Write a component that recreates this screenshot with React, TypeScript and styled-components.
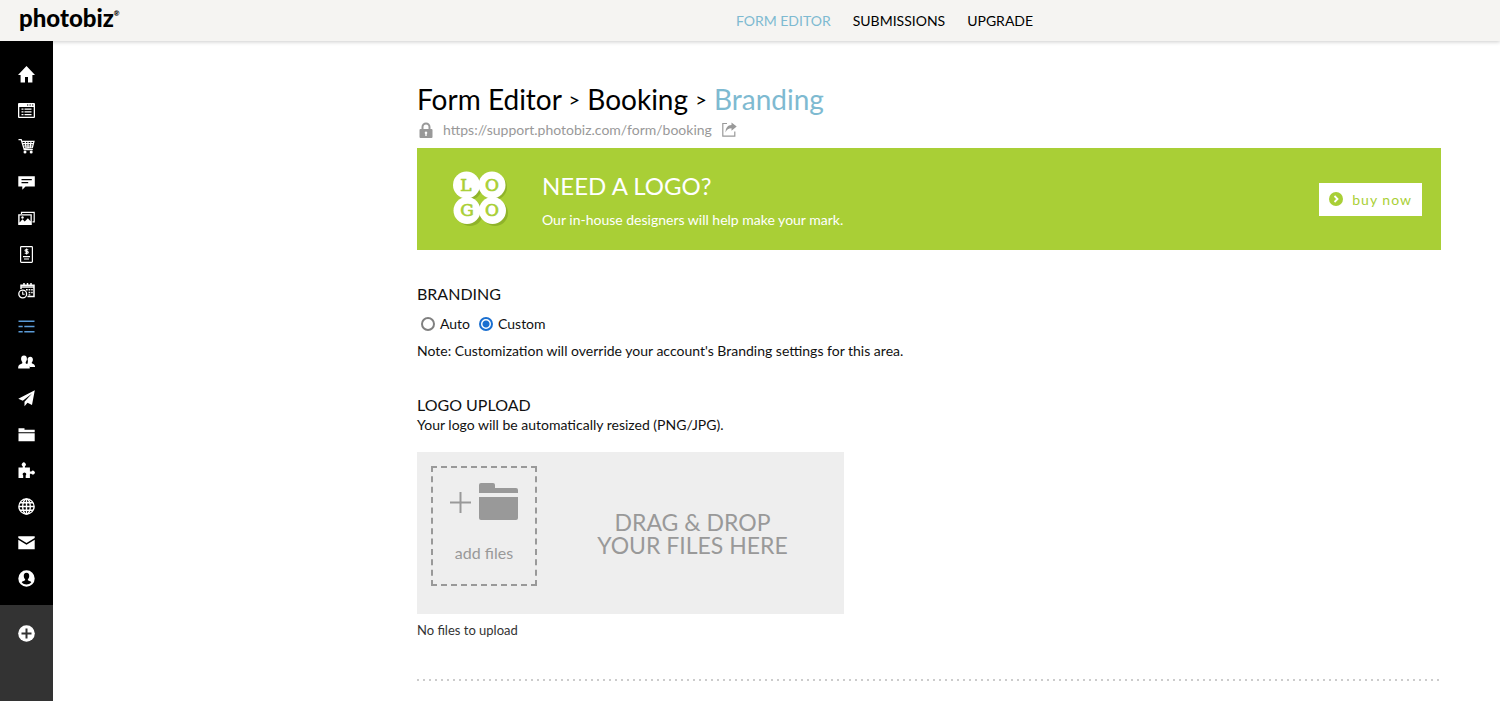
import React, { useState } from "react";
import styled, { createGlobalStyle } from "styled-components";

const GlobalStyle = createGlobalStyle`
  * { box-sizing: border-box; }
  body {
    margin: 0;
    background: #fff;
    color: #111;
    font-family: Lato, "Open Sans", sans-serif;
    font-size: 14px;
    line-height: 20px;
  }
  h1, h2, p, ul { margin: 0; padding: 0; }
  button { font-family: inherit; cursor: pointer; }
`;

const Page = styled.div`
  min-height: 100vh;
  display: flex;
  flex-direction: column;
`;

const Header = styled.header`
  display: flex;
  align-items: center;
  height: 41px;
  background: #f5f4f2;
  box-shadow: 0 1px 4px rgba(0, 0, 0, 0.2);
`;

const Brand = styled.a`
  flex: 0 0 269px;
  display: flex;
  align-items: flex-start;
  padding: 0 0 6px 19px;
  color: #000;
  font-size: 24px;
  font-weight: 900;
  line-height: 24px;
  text-decoration: none;

  sup {
    font-size: 7px;
    line-height: 14px;
  }
`;

const TopNav = styled.nav`
  flex: 1;
  display: flex;
  justify-content: center;
  gap: 22px;
`;

const TopLink = styled.a<{ $active?: boolean }>`
  color: ${(p) => (p.$active ? "#7ebad1" : "#000")};
  font-size: 14px;
  text-decoration: none;
`;

const Body = styled.div`
  flex: 1;
  display: flex;
`;

const Sidebar = styled.nav`
  position: relative;
  flex: 0 0 53px;
  display: flex;
  flex-direction: column;
  background: #333;
`;

const SideList = styled.ul`
  list-style: none;
  background: #000;
  && { padding: 15px 0 9px; }
`;

const SideLink = styled.a<{ $active?: boolean }>`
  display: flex;
  align-items: center;
  justify-content: center;
  height: 36px;
  color: ${(p) => (p.$active ? "#5b9bd8" : "#fff")};
`;

const SideFooter = styled.div`
  padding-top: 10px;
`;

const Main = styled.main`
  flex: 1;
  min-width: 0;
  padding: 40px 59px 20px;
`;

const Content = styled.div`
  max-width: 1024px;
  margin-left: auto;
`;

const Title = styled.h1`
  font-size: 28px;
  font-weight: 400;
  line-height: 36px;
  color: #000;
`;

const Current = styled.span`
  color: #7ebad1;
`;

const Chevron = styled.span`
  font-size: 20px;
  line-height: 20px;
  vertical-align: 3px;
`;

const UrlRow = styled.div`
  display: flex;
  align-items: center;
  gap: 10px;
  height: 31px;
  padding: 0 0 6px 2px;
  color: #999;

  a {
    color: inherit;
    text-decoration: none;
  }
`;

const Banner = styled.section`
  display: flex;
  align-items: center;
  height: 102px;
  padding: 0 19px 0 35px;
  background: #a9cf36;
  color: #fff;
`;

const BannerText = styled.div`
  flex: 1;
  padding: 2px 0 0 32px;
`;

const BannerTitle = styled.h2`
  font-size: 24px;
  font-weight: 400;
  line-height: 32px;
`;

const BannerNote = styled.p`
  padding-top: 8px;
`;

const BuyButton = styled.button`
  display: flex;
  align-items: center;
  gap: 9px;
  height: 33px;
  padding: 0 10px;
  border: 0;
  background: #fff;
  color: #a9cf36;
  font-size: 14px;
  letter-spacing: 1px;
`;

const Section = styled.section`
  padding-top: 34px;
`;

const SectionTitle = styled.h2`
  font-size: 16px;
  font-weight: 400;
  line-height: 20px;
`;

const Choices = styled.div`
  display: flex;
  gap: 9px;
  padding: 10px 0 7px 4px;
`;

const Choice = styled.label`
  display: flex;
  align-items: center;
  gap: 5px;

  input {
    appearance: none;
    width: 14px;
    height: 14px;
    margin: 0;
    border: 2px solid #808080;
    border-radius: 50%;
  }

  input:checked {
    border-color: #1a6fd0;
    background: radial-gradient(circle, #1a6fd0 3px, #fff 4px);
  }
`;

const DropZone = styled.div`
  display: flex;
  width: 427px;
  max-width: 100%;
  height: 162px;
  margin-top: 17px;
  padding: 14px;
  background: #eee;
  color: #999;
`;

const AddFiles = styled.button`
  display: flex;
  flex-direction: column;
  align-items: center;
  gap: 20px;
  width: 106px;
  height: 120px;
  padding: 14px 0 0;
  border: 2px dashed #999;
  background: none;
  color: inherit;
  font-size: 16px;
  line-height: 24px;
`;

const DropText = styled.p`
  flex: 1;
  padding: 45px 0 0 18px;
  font-size: 23px;
  line-height: 23px;
  text-align: center;
`;

const Status = styled.p`
  padding-top: 6px;
  font-size: 13px;
  color: #333;
`;

const Divider = styled.hr`
  height: 2px;
  margin: 39px 0 0;
  border: 0;
  background: repeating-linear-gradient(to right, #ccc 0 2px, transparent 2px 6px);
`;

const Icon = ({ children }: { children: React.ReactNode }) => (
  <svg width="17" height="17" viewBox="0 0 17 17" fill="currentColor" aria-hidden="true">
    {children}
  </svg>
);

const icons: { name: string; art: React.ReactNode }[] = [
  { name: "Home", art: <path d="M8.5 0 0 9h2.600v7.500h4.400V11h3v5.500h4.400V9H17z" /> },
  {
    name: "Website",
    art: (
      <>
        <path fillRule="evenodd" d="M1 1h15a1 1 0 0 1 1 1v13a1 1 0 0 1-1 1H1a1 1 0 0 1-1-1V2a1 1 0 0 1 1-1zM1.3 5v9.7h14.4V5zM9 2.4v1h1.3v-1zm2.5 0v1h1.3v-1zm2.5 0v1h1.3v-1z" />
        <path d="M3.5 6.5h2v1.3h-2zM6.5 6.5h7v1.3h-7zM3.5 9.2h2v1.3h-2zM6.5 9.2h7v1.3h-7zM3.5 12h2v1.3h-2zM6.5 12h7v1.3h-7z" />
      </>
    ),
  },
  {
    name: "Store",
    art: (
      <>
        <path d="M0.5 1.7h2.7l3 10h8.6M3.7 3.3H16l-1.6 6.3L5.6 10.3M4.4 5.6h11M5.2 8h9.9M7.2 3.3l.8 6.5M10 3.3v6.5M13 3.3l-.8 6.5" fill="none" stroke="currentColor" strokeWidth="1.2" />
        <circle cx="7" cy="14" r="1.5" />
        <circle cx="13.2" cy="14" r="1.5" />
      </>
    ),
  },
  { name: "Blog", art: <path fillRule="evenodd" d="M0.3 2.2h16.5v10.2H7.5L4.3 15.7v-3.3h-4zM3.5 5v1.3h10.3V5zm0 3v1.3h6.7V8z" /> },
  {
    name: "Galleries",
    art: (
      <>
        <path d="M3.5 4V2.3h12.7v9.5H14.5" fill="none" stroke="currentColor" strokeWidth="1.2" />
        <path fillRule="evenodd" d="M0.2 4.2h13.6V15H0.2zM1.6 5.5v7l2.9-3.2 2.2 2.1 3.2-3.2 2.6 3V5.5z" />
        <circle cx="4.5" cy="7.5" r="1.2" />
      </>
    ),
  },
  {
    name: "Invoices",
    art: (
      <>
        <rect x="2.6" y="0.7" width="11.8" height="15.6" rx="0.8" fill="none" stroke="currentColor" strokeWidth="1.2" />
        <path d="M10.2 4c-.8-.8-3.2-.8-3.2.4 0 1.400 3.300.6 3.300 2.100 0 1.300-2.600 1.300-3.500.4M8.600 2.500v6M5 10.600h7M6 13h5" fill="none" stroke="currentColor" strokeWidth="1.1" />
      </>
    ),
  },
  {
    name: "Scheduler",
    art: (
      <>
        <path d="M3 7V3.200h13V14.400H9.500M3 5h13M6 1v3M9.500 1v3M13 1v3" fill="none" stroke="currentColor" strokeWidth="1.500" />
        <path d="M8 7h1.700v1.600H8zM10.600 7h1.700v1.600h-1.700zM13.200 7h1.500v1.600h-1.500zM10.600 9.700h1.700v1.600h-1.700zM13.200 9.700h1.500v1.600h-1.500zM10.600 12.200h1.700v1.200h-1.700z" />
        <circle cx="4.700" cy="12" r="3.900" fill="none" stroke="currentColor" strokeWidth="1.300" />
        <path d="M4.700 9.500v2.700H6.600" fill="none" stroke="currentColor" strokeWidth="1.100" />
      </>
    ),
  },
  { name: "Forms", art: <path d="M0.500 2.500h16v1.500h-16zM0.500 7.800h4.200v1.500H0.500zM6.300 7.800h10.200v1.500H6.300zM0.500 13h4.200v1.500H0.500zM6.300 13h10.200v1.500H6.300z" /> },
  {
    name: "Clients",
    art: (
      <>
        <path d="M12.200 2.700c1.900 0 2.900 1.400 2.700 3.200-.1 1-.6 1.900-1.100 2.400v1c1.200.7 3 1 3.200 2.900v.9h-5.200c-.5-1.300-2-1.800-3-2.300.9-1.100 1.600-3.700.7-5.600.3-1.500 1.200-2.500 2.700-2.500z" />
        <path d="M6 1.500c2.100 0 3.100 1.600 2.900 3.700-.1 1.200-.600 2.200-1.200 2.800v1.300c1.500 1 3.800 1.400 4 3.600v1.700H0.200v-1.700c.2-2.200 2.600-2.600 4.100-3.600V8C3.700 7.400 3.200 6.400 3.100 5.200 2.900 3.100 3.900 1.500 6 1.500z" />
      </>
    ),
  },
  { name: "Marketing", art: <path d="M16.800 0.300 14 15l-4.500-2.200-3 3.500v-4.500L14 3.600 4.800 10.700 0.300 8.800z" /> },
  { name: "Files", art: <path d="M0.500 2.300h6v1.500h10.200v2.400H0.500zM0.500 7.200h16.200v8H0.500z" /> },
  { name: "Add-ons", art: <path d="M0.500 5.500h4.200V4.200a2 2 0 1 1 2.200 0v1.300h5v3.900h1.500a1.900 1.900 0 1 1 0 2.300h-1.500V16H7.700v-2.600a1.700 1.700 0 1 0-2.500 0V16H0.500z" /> },
  {
    name: "Domains",
    art: (
      <g fill="none" stroke="currentColor" strokeWidth="1.400">
        <circle cx="8.500" cy="8.500" r="7.600" />
        <ellipse cx="8.500" cy="8.500" rx="3.800" ry="7.600" />
        <path d="M8.500 1v15M1 8.500h15M2 4.800h13M2 12.200h13" />
      </g>
    ),
  },
  { name: "Email", art: <path d="M0.300 2.300h16.400v1.800L8.500 9 0.300 4.100zM0.300 5.800l8.200 4.900 8.200-4.900v9.400H0.300z" /> },
  {
    name: "Account",
    art: (
      <path fillRule="evenodd" d="M8.500 0.300a8.200 8.200 0 1 1 0 16.400 8.200 8.200 0 0 1 0-16.400zM8.500 2.800C6.500 2.800 5.600 4.300 5.800 6.200c.1 1.300.6 2.300 1.300 2.900v1.200C5.700 11 4.300 11.300 3.700 12.300c1.200 1.500 3 2.200 4.800 2.200s3.600-.7 4.800-2.200c-.6-1-2-1.300-3.400-2V9.100c.7-.6 1.200-1.600 1.300-2.900.2-1.900-.7-3.400-2.700-3.400z" />
    ),
  },
];

const LogoMark = () => (
  <svg width="58" height="58" viewBox="0 0 58 58" aria-hidden="true">
    <g fill="#8fb32a" transform="translate(2 2)">
      <circle cx="15" cy="15" r="13" />
      <circle cx="40" cy="15" r="13" />
      <circle cx="16" cy="41" r="13" />
      <circle cx="41" cy="41" r="13" />
    </g>
    <g fill="#fff">
      <circle cx="14.500" cy="15" r="13.500" />
      <circle cx="40" cy="15" r="13.500" />
      <circle cx="15" cy="40.500" r="13.500" />
      <circle cx="40.500" cy="40.500" r="13.500" />
    </g>
    <g fill="#a9cf36" stroke="#a9cf36" strokeWidth="0.700" fontFamily="'DejaVu Serif', serif" fontSize="17" textAnchor="middle">
      <text x="14" y="21">L</text>
      <text x="40" y="21">O</text>
      <text x="15" y="46">G</text>
      <text x="40" y="46">O</text>
    </g>
  </svg>
);

export default function App() {
  const [mode, setMode] = useState("custom");

  return (
    <Page>
      <GlobalStyle />
      <Header>
        <Brand href="#">
          photobiz<sup>®</sup>
        </Brand>
        <TopNav>
          <TopLink href="#editor" $active>FORM EDITOR</TopLink>
          <TopLink href="#submissions">SUBMISSIONS</TopLink>
          <TopLink href="#upgrade">UPGRADE</TopLink>
        </TopNav>
      </Header>
      <Body>
        <Sidebar>
          <SideList>
            {icons.map(({ name, art }) => (
              <li key={name}>
                <SideLink href={"#" + name.toLowerCase()} aria-label={name} $active={name === "Forms"}>
                  <Icon>{art}</Icon>
                </SideLink>
              </li>
            ))}
          </SideList>
          <SideFooter>
            <SideLink href="#add" aria-label="Add">
              <Icon>
                <circle cx="8.500" cy="8.500" r="8.300" />
                <path d="M8.500 3.500v10M3.500 8.500h10" stroke="#333" strokeWidth="2" />
              </Icon>
            </SideLink>
          </SideFooter>
        </Sidebar>
        <Main>
          <Content>
            <Title>
              Form Editor <Chevron>&gt;</Chevron> Booking <Chevron>&gt;</Chevron> <Current>Branding</Current>
            </Title>
            <UrlRow>
              <svg width="14" height="16" viewBox="0 0 14 16" aria-hidden="true">
                <path d="M3.500 8V5a3.500 3.500 0 0 1 7 0v3" fill="none" stroke="#999" strokeWidth="2" />
                <path fill="#999" fillRule="evenodd" d="M1.500 7h11a1 1 0 0 1 1 1v7a1 1 0 0 1-1 1h-11a1 1 0 0 1-1-1V8a1 1 0 0 1 1-1zM7 9.500a1.300 1.300 0 0 0-.7 2.400V14h1.400v-2.100A1.300 1.300 0 0 0 7 9.500z" />
              </svg>
              <a href="#form">https://support.photobiz.com/form/booking</a>
              <svg width="15" height="15" viewBox="0 0 15 15" aria-hidden="true">
                <path d="M5 1.500H0.800v12.700h12V9.500" fill="none" stroke="#999" strokeWidth="1.200" />
                <path d="M9.500 0.500 14.700 4.500 9.500 8.700V6.200C6.500 6.200 4.800 7.500 3.500 10.500 3.500 6 5.500 3.200 9.500 3z" fill="#999" />
              </svg>
            </UrlRow>
            <Banner>
              <LogoMark />
              <BannerText>
                <BannerTitle>NEED A LOGO?</BannerTitle>
                <BannerNote>Our in-house designers will help make your mark.</BannerNote>
              </BannerText>
              <BuyButton type="button">
                <svg width="14" height="14" viewBox="0 0 14 14" aria-hidden="true">
                  <circle cx="7" cy="7" r="7" fill="#a9cf36" />
                  <path d="M5.500 4 8.500 7l-3 3" fill="none" stroke="#fff" strokeWidth="1.800" />
                </svg>
                buy now
              </BuyButton>
            </Banner>
            <Section>
              <SectionTitle>BRANDING</SectionTitle>
              <Choices role="radiogroup" aria-label="Branding">
                <Choice>
                  <input type="radio" name="mode" checked={mode === "auto"} onChange={() => setMode("auto")} />
                  Auto
                </Choice>
                <Choice>
                  <input type="radio" name="mode" checked={mode === "custom"} onChange={() => setMode("custom")} />
                  Custom
                </Choice>
              </Choices>
              <p>Note: Customization will override your account's Branding settings for this area.</p>
            </Section>
            <Section>
              <SectionTitle>LOGO UPLOAD</SectionTitle>
              <p>Your logo will be automatically resized (PNG/JPG).</p>
              <DropZone>
                <AddFiles type="button">
                  <svg width="70" height="39" viewBox="0 0 70 39" aria-hidden="true">
                    <path d="M11.500 10v21M1 20.500h21" stroke="#999" strokeWidth="2" />
                    <path fill="#999" d="M32 1h12a2 2 0 0 1 2 2v3h21a2 2 0 0 1 2 2v3H30V3a2 2 0 0 1 2-2zM30 15h39v21a2 2 0 0 1-2 2H32a2 2 0 0 1-2-2z" />
                  </svg>
                  add files
                </AddFiles>
                <DropText>
                  DRAG &amp; DROP
                  <br />
                  YOUR FILES HERE
                </DropText>
              </DropZone>
              <Status>No files to upload</Status>
            </Section>
            <Divider />
          </Content>
        </Main>
      </Body>
    </Page>
  );
}
